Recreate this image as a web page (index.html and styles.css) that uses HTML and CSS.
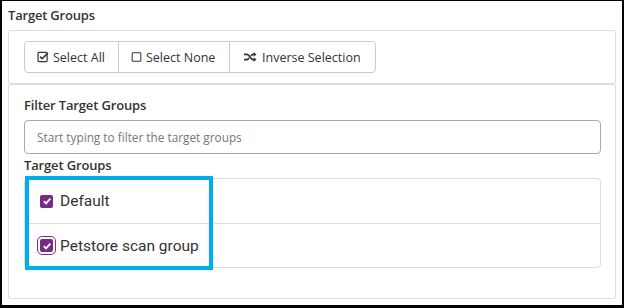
FILE: index.html
```html
<!DOCTYPE html>
<html>
<head>
<meta charset="utf-8">
<link rel="stylesheet" href="styles.css">
</head>
<body>
<div class="frame">
  <div class="title">Target Groups</div>
  <div class="panel top">
    <div class="btn-group">
      <button class="btn">
        <svg class="ico" viewBox="0 0 14 14" width="12" height="12"><rect x="1.2" y="1.7" width="10.6" height="10.6" rx="1.2" fill="none" stroke="#333" stroke-width="1.4"/><path d="M3.6 6.6 L6 9 L12.6 2.4" fill="none" stroke="#333" stroke-width="1.9"/></svg>Select All
      </button>
      <button class="btn">
        <svg class="ico" viewBox="0 0 14 14" width="11" height="12"><rect x="1.5" y="1.5" width="11" height="11" rx="1.2" fill="none" stroke="#333" stroke-width="1.3"/></svg>Select None
      </button>
      <button class="btn">
        <svg class="ico" viewBox="0 0 16 14" width="16" height="12"><path d="M1 4 H4.5 C7.5 4 8.5 10 11.5 10 H13" fill="none" stroke="#333" stroke-width="2"/><path d="M1 10 H4.5 C5.5 10 6.2 9.2 6.8 8.2 M9.2 5.8 C9.8 4.8 10.5 4 11.5 4 H13" fill="none" stroke="#333" stroke-width="2"/><path d="M12.3 1.2 L15.5 4 L12.3 6.8 Z M12.3 7.2 L15.5 10 L12.3 12.8 Z" fill="#333"/></svg>Inverse Selection
      </button>
    </div>
  </div>
  <div class="panel bottom">
    <div class="label">Filter Target Groups</div>
    <input class="filter" type="text" placeholder="Start typing to filter the target groups">
    <div class="label label2">Target Groups</div>
    <div class="list-wrap">
      <ul class="list">
        <li class="row"><span class="cb"><svg viewBox="0 0 12 12" width="12" height="12"><path d="M2.8 6.2 L5 8.4 L9.4 3.6" fill="none" stroke="#fff" stroke-width="1.8"/></svg></span>Default</li>
        <li class="row"><span class="cb focus"><svg viewBox="0 0 12 12" width="12" height="12"><path d="M2.8 6.2 L5 8.4 L9.4 3.6" fill="none" stroke="#fff" stroke-width="1.8"/></svg></span>Petstore scan group</li>
      </ul>
      <div class="highlight"></div>
    </div>
  </div>
</div>
</body>
</html>
```
FILE: styles.css
```css
* { box-sizing: border-box; }
html, body { margin: 0; padding: 0; }
body {
  width: 624px;
  height: 308px;
  background: #000;
  font-family: "Open Sans", "Liberation Sans", sans-serif;
  color: #333;
}
.frame {
  margin: 1px 2px 0 2px;
  width: 620px;
  height: 304px;
  background: #fff;
  padding: 6px 6px 0 6px;
  display: flex;
  flex-direction: column;
}
.title {
  font-family: "Open Sans", sans-serif;
  font-weight: 600;
  font-size: 13px;
  height: 23px;
  line-height: 16px;
  letter-spacing: -0.2px;
}
.panel {
  border: 1px solid #ddd;
  border-radius: 2px;
  width: 608px;
}
.top {
  height: 54px;
  padding: 10px 15px;
}
.btn-group { display: flex; }
.btn {
  display: flex;
  align-items: center;
  gap: 4px;
  height: 32px;
  padding: 0 11px 0 12px;
  background: #fff;
  border: 1px solid #ccc;
  margin-left: -1px;
  font-family: "Open Sans", sans-serif;
  font-size: 12.5px;
  color: #333;
}
.btn:first-child { margin-left: 0; border-radius: 4px 0 0 4px; }
.btn:last-child { border-radius: 0 4px 4px 0; }
.btn:nth-child(1) { width: 95px; }
.btn:nth-child(2) { width: 112px; }
.btn:nth-child(3) { width: 147px; }
.ico { flex: none; }
.bottom {
  height: 215px;
  padding: 12px 15px 0 15px;
}
.label {
  font-weight: 600;
  font-size: 13px;
  line-height: 16px;
  height: 23px;
  letter-spacing: -0.15px;
}
.filter {
  display: block;
  width: 577px;
  height: 34px;
  border: 1px solid #aaa;
  border-radius: 4px;
  padding: 0 12px;
  font-family: "Open Sans", sans-serif;
  font-size: 11.8px;
  color: #555;
}
.filter::placeholder { color: #777; }
.label2 { margin-top: 2px; height: 22px; padding-top: 1px; }
.list-wrap { position: relative; width: 577px; }
.list {
  list-style: none;
  margin: 0;
  padding: 0;
  border: 1px solid #ddd;
  border-radius: 4px;
}
.row {
  display: flex;
  align-items: center;
  height: 44px;
  padding-left: 15px;
  font-family: Roboto, "Liberation Sans", sans-serif;
  font-size: 15.5px;
  color: #333;
}
.row + .row { border-top: 1px solid #ddd; }
.cb {
  width: 13px;
  height: 13px;
  background: #782a87;
  border-radius: 2px;
  display: flex;
  align-items: center;
  justify-content: center;
  margin-right: 7px;
  flex: none;
}
.cb.focus {
  outline: 1px solid #782a87;
  outline-offset: 2px;
}
.highlight {
  position: absolute;
  left: 1px;
  top: -2px;
  width: 188px;
  height: 94px;
  border: 4px solid #00aeef;
  pointer-events: none;
}
```
